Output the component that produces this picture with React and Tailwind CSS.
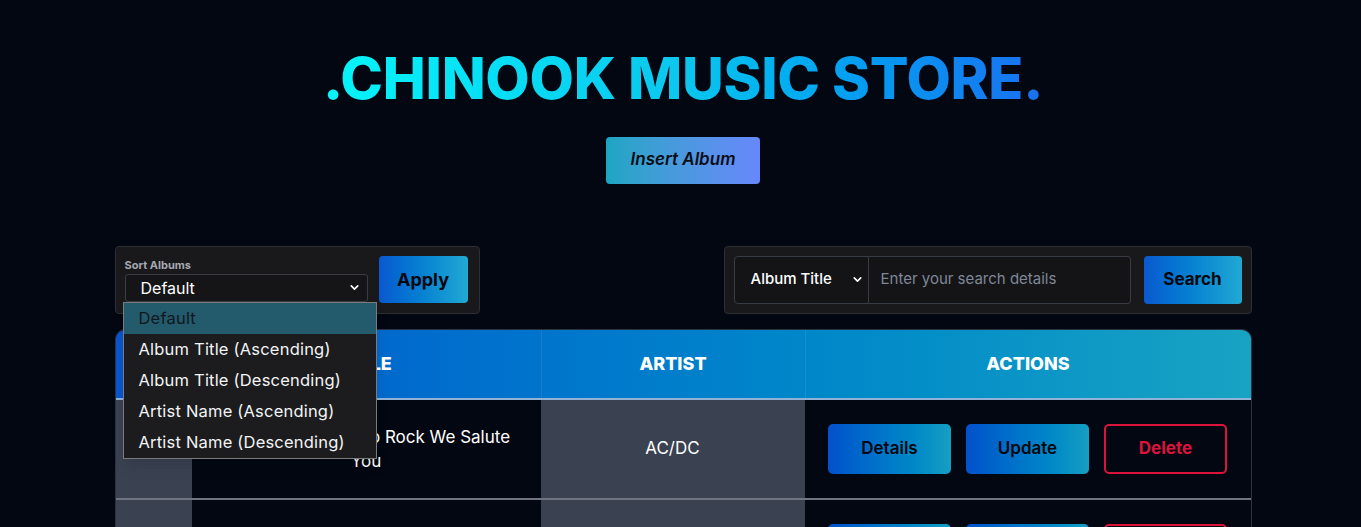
import { ChevronDown } from "lucide-react";

const font = { fontFamily: "Inter, 'Noto Sans', sans-serif" };

const albums = [
  { id: 1, title: "For Those About To Rock We Salute You", artist: "AC/DC" },
  { id: 2, title: "Balls to the Wall", artist: "Accept" },
];

const sortOptions = [
  "Default",
  "Album Title (Ascending)",
  "Album Title (Descending)",
  "Artist Name (Ascending)",
  "Artist Name (Descending)",
];

function ActionButtons() {
  return (
    <div className="flex items-center justify-center gap-[15px]">
      <button className="w-[123px] h-[50px] rounded-[5px] bg-gradient-to-r from-[#0650cc] to-[#169ec3] text-[17px] font-semibold text-[#05070d]">
        Details
      </button>
      <button className="w-[123px] h-[50px] rounded-[5px] bg-gradient-to-r from-[#0650cc] to-[#169ec3] text-[17px] font-semibold text-[#05070d]">
        Update
      </button>
      <button className="w-[123px] h-[50px] rounded-[5px] border-2 border-[#dc143c] text-[17px] font-bold text-[#dc143c]">
        Delete
      </button>
    </div>
  );
}

export default function App() {
  return (
    <div className="h-[527px] bg-[#030712] text-white overflow-hidden" style={font}>
      <div className="pl-[5px] flex flex-col items-center">
        <h1 className="mt-[50px] text-[57.5px] leading-none font-extrabold tracking-[-0.3px] bg-gradient-to-r from-[#07f5f9] via-[#0cc6ee] to-[#1a6ff0] bg-clip-text text-transparent">
          .CHINOOK MUSIC STORE.
        </h1>

        <button className="mt-[29px] w-[154px] h-[47px] rounded-[4px] bg-gradient-to-r from-[#1aa6c3] to-[#6687fb] text-[17px] font-semibold italic text-[#0b0d14]">
          Insert Album
        </button>

        <div className="mt-[62px] w-[1137px]">
          <div className="flex items-start justify-between">
            <div className="relative w-[365px] h-[68px] rounded-[4px] border border-[#2b2e34] bg-[#19191b] px-[9px] py-[9px] flex gap-[11px]">
              <div className="flex flex-col">
                <span className="mt-[2px] text-[11px] leading-[14px] font-bold text-[#a5a8b0]">Sort Albums</span>
                <div className="mt-[2px] w-[243px] h-[28px] rounded-[3px] border border-[#3a3d44] bg-[#151518] flex items-center justify-between pl-[15px] pr-[6px]">
                  <span className="text-[16px]">Default</span>
                  <ChevronDown size={13} strokeWidth={3} />
                </div>
              </div>
              <button className="w-[89px] h-[47px] rounded-[4px] bg-gradient-to-r from-[#0c58cf] to-[#21a9d3] text-[18px] font-bold text-[#05070d]">
                Apply
              </button>

              <div className="absolute left-[7px] top-[55px] z-10 w-[254px] border border-[#7b7b7b] bg-[#1c1c1e] shadow-lg">
                {sortOptions.map((opt, i) => (
                  <div
                    key={opt}
                    className={`h-[31px] flex items-center pl-[15px] text-[16.5px] tracking-[0.2px] ${
                      i === 0 ? "bg-[#235a6c] text-[#10181d]" : "text-[#f3f4f6]"
                    }`}
                  >
                    {opt}
                  </div>
                ))}
              </div>
            </div>

            <div className="w-[528px] h-[68px] rounded-[4px] border border-[#2b2e34] bg-[#19191b] p-[9px] flex items-center">
              <div className="w-[135px] h-[48px] rounded-l-[4px] border border-[#383c44] bg-[#141417] flex items-center justify-between pl-[16px] pr-[4px]">
                <span className="text-[15px] font-medium">Album Title</span>
                <ChevronDown size={13} strokeWidth={3} />
              </div>
              <div className="w-[262px] h-[48px] rounded-r-[4px] border border-l-0 border-[#383c44] bg-[#141417] flex items-center pl-[12px]">
                <span className="text-[15px] text-[#7f8796]">Enter your search details</span>
              </div>
              <button className="ml-[13px] w-[98px] h-[48px] rounded-[4px] bg-gradient-to-r from-[#0c58cf] to-[#21a9d3] text-[17px] font-bold text-[#05070d]">
                Search
              </button>
            </div>
          </div>

          <div className="mt-[15px] rounded-t-[10px] border border-[#2b3442] overflow-hidden">
            <div className="flex h-[70px] bg-gradient-to-r from-[#0a55cf] to-[#18a3c3] border-b-2 border-[#8fb2d6] text-[18px] font-extrabold">
              <div className="w-[76px] flex items-center justify-center">ID</div>
              <div className="w-[349px] flex items-center justify-center border-l border-[#1d6fd0]">TITLE</div>
              <div className="w-[264px] flex items-center justify-center border-l border-[#1b7ad0]">ARTIST</div>
              <div className="flex-1 flex items-center justify-center border-l border-[#1a8cd0]">ACTIONS</div>
            </div>
            {albums.map((a) => (
              <div key={a.id} className="flex h-[100px] border-b-2 border-[#6f7480] text-[17px]">
                <div className="w-[76px] bg-[#3a4252] flex items-center justify-center">{a.id}</div>
                <div className="w-[349px] px-[22px] flex items-center justify-center text-center leading-[24px]">
                  {a.title}
                </div>
                <div className="w-[264px] bg-[#3a4252] flex items-center justify-center">{a.artist}</div>
                <div className="flex-1 flex items-center justify-center">
                  <ActionButtons />
                </div>
              </div>
            ))}
          </div>
        </div>
      </div>
    </div>
  );
}
